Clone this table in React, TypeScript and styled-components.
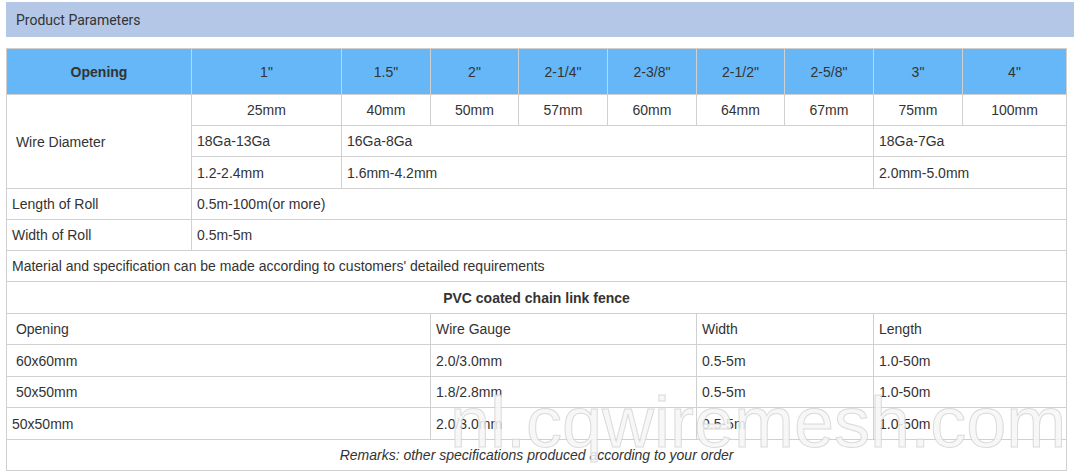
import React from "react";
import styled, { createGlobalStyle } from "styled-components";

const Global = createGlobalStyle`
  html, body { margin: 0; padding: 0; background: #fff; }
  body { font-family: "Liberation Sans", Arial, sans-serif; color: #333; }
`;

const Page = styled.div`
  position: relative;
  padding: 2px 0 0 6px;
  width: 1068px;
  height: 474px;
  overflow: hidden;
`;

const TitleBar = styled.div`
  height: 35px;
  background: #b4c7e7;
  display: flex;
  align-items: center;
  padding-left: 10px;
  font-family: Roboto, "Liberation Sans", sans-serif;
  font-size: 14px;
  color: #333;
`;

const Table = styled.table`
  margin-top: 11px;
  width: 1060px;
  border-collapse: collapse;
  table-layout: fixed;
  font-size: 14px;
  color: #333;
`;

const Row = styled.tr<{ $h: number }>`
  height: ${(p) => p.$h}px;
`;

const Cell = styled.td<{ $center?: boolean; $bold?: boolean; $italic?: boolean; $head?: boolean }>`
  border: 1px solid #d0d0d0;
  padding: 0 5px;
  white-space: pre;
  text-align: ${(p) => (p.$center ? "center" : "left")};
  font-weight: ${(p) => (p.$bold ? 700 : 400)};
  font-style: ${(p) => (p.$italic ? "italic" : "normal")};
  background: ${(p) => (p.$head ? "#65b7f7" : "#fff")};
  vertical-align: middle;
`;

const Watermark = styled.div`
  position: absolute;
  left: 450px;
  top: 386px;
  font-family: "Liberation Sans", Arial, sans-serif;
  font-size: 72px;
  line-height: 72px;
  white-space: nowrap;
  color: rgba(246, 246, 246, 0.85);
  -webkit-text-stroke: 1px rgba(205, 205, 205, 0.7);
  pointer-events: none;
`;

const widths = [185, 150, 89, 88, 89, 89, 88, 89, 89, 104];
const heads = ['1"', '1.5"', '2"', '2-1/4"', '2-3/8"', '2-1/2"', '2-5/8"', '3"', '4"'];
const mms = ["25mm", "40mm", "50mm", "57mm", "60mm", "64mm", "67mm", "75mm", "100mm"];

const pvc = [
  [" 60x60mm", "2.0/3.0mm", "0.5-5m", "1.0-50m"],
  [" 50x50mm", "1.8/2.8mm", "0.5-5m", "1.0-50m"],
  ["50x50mm", "2.0/3.0mm", "0.5-5m", "1.0-50m"],
];

export default function App() {
  return (
    <>
      <Global />
      <Page>
        <TitleBar>Product Parameters</TitleBar>
        <Table>
          <colgroup>
            {widths.map((w, i) => (
              <col key={i} style={{ width: w }} />
            ))}
          </colgroup>
          <tbody>
            <Row $h={46}>
              <Cell $head $center $bold>Opening</Cell>
              {heads.map((h) => (
                <Cell key={h} $head $center>{h}</Cell>
              ))}
            </Row>
            <Row $h={31}>
              <Cell rowSpan={3}> Wire Diameter</Cell>
              {mms.map((m) => (
                <Cell key={m} $center>{m}</Cell>
              ))}
            </Row>
            <Row $h={31}>
              <Cell>18Ga-13Ga</Cell>
              <Cell colSpan={6}>16Ga-8Ga</Cell>
              <Cell colSpan={2}>18Ga-7Ga</Cell>
            </Row>
            <Row $h={32}>
              <Cell>1.2-2.4mm</Cell>
              <Cell colSpan={6}>1.6mm-4.2mm</Cell>
              <Cell colSpan={2}>2.0mm-5.0mm</Cell>
            </Row>
            <Row $h={31}>
              <Cell>Length of Roll</Cell>
              <Cell colSpan={9}>0.5m-100m(or more)</Cell>
            </Row>
            <Row $h={31}>
              <Cell>Width of Roll</Cell>
              <Cell colSpan={9}>0.5m-5m</Cell>
            </Row>
            <Row $h={31}>
              <Cell colSpan={10}>Material and specification can be made according to customers' detailed requirements</Cell>
            </Row>
            <Row $h={32}>
              <Cell colSpan={10} $center $bold>PVC coated chain link fence</Cell>
            </Row>
            <Row $h={31}>
              <Cell colSpan={3}> Opening</Cell>
              <Cell colSpan={3}>Wire Gauge</Cell>
              <Cell colSpan={2}>Width</Cell>
              <Cell colSpan={2}>Length</Cell>
            </Row>
            {pvc.map((r, i) => (
              <Row key={i} $h={i === 1 ? 31 : 32}>
                <Cell colSpan={3}>{r[0]}</Cell>
                <Cell colSpan={3}>{r[1]}</Cell>
                <Cell colSpan={2}>{r[2]}</Cell>
                <Cell colSpan={2}>{r[3]}</Cell>
              </Row>
            ))}
            <Row $h={31}>
              <Cell colSpan={10} $center $italic>Remarks: other specifications produced according to your order</Cell>
            </Row>
          </tbody>
        </Table>
        <Watermark>nl.cqwiremesh.com</Watermark>
      </Page>
    </>
  );
}
